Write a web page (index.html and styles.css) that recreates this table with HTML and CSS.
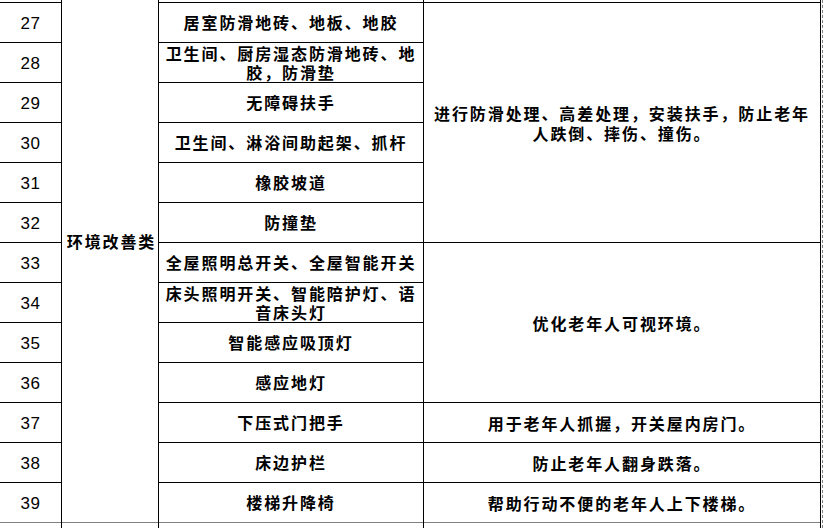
FILE: index.html
```html
<!DOCTYPE html>
<html lang="zh">
<head>
<meta charset="utf-8">
<link rel="stylesheet" href="styles.css">
</head>
<body>
<div class="sheet">
  <div class="grid">
    <!-- row 26 (partial, above view) -->
    <div class="cell num"></div>
    <div class="cell cat">环境改善类</div>
    <div class="cell"></div>
    <div class="cell"></div>

    <div class="cell num">27</div>
    <div class="cell">居室防滑地砖、地板、地胶</div>
    <div class="cell desc span6">进行防滑处理、高差处理，安装扶手，防止老年人跌倒、摔伤、撞伤。</div>

    <div class="cell num">28</div>
    <div class="cell">卫生间、厨房湿态防滑地砖、地胶，防滑垫</div>

    <div class="cell num">29</div>
    <div class="cell">无障碍扶手</div>

    <div class="cell num">30</div>
    <div class="cell">卫生间、淋浴间助起架、抓杆</div>

    <div class="cell num">31</div>
    <div class="cell">橡胶坡道</div>

    <div class="cell num">32</div>
    <div class="cell">防撞垫</div>

    <div class="cell num">33</div>
    <div class="cell">全屋照明总开关、全屋智能开关</div>
    <div class="cell desc span4">优化老年人可视环境。</div>

    <div class="cell num">34</div>
    <div class="cell">床头照明开关、智能陪护灯、语音床头灯</div>

    <div class="cell num">35</div>
    <div class="cell">智能感应吸顶灯</div>

    <div class="cell num">36</div>
    <div class="cell">感应地灯</div>

    <div class="cell num">37</div>
    <div class="cell">下压式门把手</div>
    <div class="cell desc">用于老年人抓握，开关屋内房门。</div>

    <div class="cell num">38</div>
    <div class="cell">床边护栏</div>
    <div class="cell desc">防止老年人翻身跌落。</div>

    <div class="cell num">39</div>
    <div class="cell">楼梯升降椅</div>
    <div class="cell desc">帮助行动不便的老年人上下楼梯。</div>

    <div class="cell num next"></div>
    <div class="cell next"></div>
    <div class="cell next"></div>
    <div class="cell next"></div>
  </div>
</div>
</body>
</html>
```

FILE: styles.css
```css
html, body {
  margin: 0;
  padding: 0;
  background: #ffffff;
  overflow: hidden;
}

.sheet {
  width: 822px;
  height: 528px;
  overflow: hidden;
  border-right: 1px dashed #808080;
  box-sizing: content-box;
}

.grid {
  display: grid;
  grid-template-columns: 61px 96px 264px 396px;
  grid-template-rows: repeat(15, 39px);
  gap: 1px;
  background: #000000;
  width: 820px;
  border-right: 1px solid #000000;
  margin-top: -37px;
  font-family: "Noto Sans CJK SC", "Noto Sans CJK JP", sans-serif;
  font-weight: 700;
  font-size: 16px;
  letter-spacing: 1.9px;
  line-height: 19px;
  color: #000000;
}

.cell {
  background: #ffffff;
  display: flex;
  align-items: center;
  justify-content: center;
  text-align: center;
  padding: 0 4px;
}

.num {
  font-family: "Liberation Sans", Arial, sans-serif;
  font-weight: 400;
  font-size: 17px;
  letter-spacing: 0.5px;
  padding: 2px 0 0 0;
}

.cat {
  grid-column: 2;
  grid-row: 1 / span 14;
  padding: 0 0 2px 3px;
}

.desc {
  grid-column: 4;
  padding: 0 6px;
  line-height: 20px;
}

.span6 {
  grid-row: span 6;
}

.span4 {
  grid-row: span 4;
}

.next {
  box-shadow: 0 -1px 0 #808080;
}
```
